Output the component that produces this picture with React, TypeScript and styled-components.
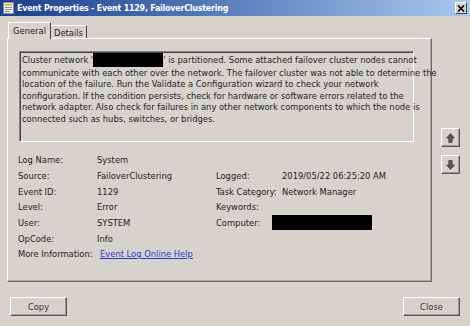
import React from "react";
import styled, { createGlobalStyle } from "styled-components";

const Global = createGlobalStyle`
  html, body { margin: 0; padding: 0; background: #d6d3cc; }
  body { font-family: "DejaVu Sans Condensed", "DejaVu Sans", sans-serif; }
`;

const Window = styled.div`
  width: 470px;
  height: 326px;
  background: #d6d3cc;
  display: flex;
  flex-direction: column;
  overflow: hidden;
  font-family: "DejaVu Sans Condensed", "DejaVu Sans", sans-serif;
  font-size: 9.3px;
  color: #1e1e1e;
`;

const TitleBar = styled.div`
  height: 16px;
  display: flex;
  align-items: center;
  padding: 0 3px;
  background: linear-gradient(to right, #1d3f8c 0%, #4d72b4 40%, #a8c9ef 100%);
  color: #fff;
  font-weight: bold;
  font-size: 8.8px;
  gap: 3px;
`;

const TitleText = styled.span`
  flex: 1;
  letter-spacing: -0.2px;
`;

const CloseBox = styled.div`
  width: 10px;
  height: 10px;
  background: #d6d3cc;
  border: 1px solid;
  border-color: #fff #404040 #404040 #fff;
  display: flex;
  align-items: center;
  justify-content: center;
`;

const Body = styled.div`
  flex: 1;
  display: flex;
  flex-direction: column;
  padding: 6px 0 0 7px;
`;

const MainRow = styled.div`
  display: flex;
  align-items: flex-start;
`;

const TabArea = styled.div`
  display: flex;
  flex-direction: column;
  width: 425px;
`;

const TabStrip = styled.div`
  display: flex;
  align-items: flex-end;
  height: 16px;
  padding-left: 1px;
  position: relative;
  z-index: 1;
`;

const Tab = styled.div<{ $active?: boolean }>`
  height: ${(p) => (p.$active ? 17 : 13)}px;
  padding: 0 ${(p) => (p.$active ? 4 : 3)}px;
  display: flex;
  align-items: center;
  box-sizing: border-box;
  background: #d6d3cc;
  border-top: 1px solid #fff;
  border-left: ${(p) => (p.$active ? "1px solid #fff" : "none")};
  border-right: 1px solid #404040;
  margin-bottom: ${(p) => (p.$active ? -1 : 0)}px;
  padding-bottom: ${(p) => (p.$active ? 2 : 0)}px;
`;

const Panel = styled.div`
  height: 244px;
  box-sizing: border-box;
  border: 1px solid;
  border-color: #fff #6c6a66 #6c6a66 #fff;
  box-shadow: inset -1px -1px 0 #a8a59e;
  padding: 12px 0 0 11px;
  display: flex;
  flex-direction: column;
`;

const Description = styled.div`
  width: 395px;
  height: 91px;
  box-sizing: border-box;
  border: 1px solid;
  border-color: #8a8782 #fff #fff #8a8782;
  box-shadow: inset 1px 1px 0 #444;
  padding: 1px 0 0 2px;
  line-height: 11.4px;
  white-space: nowrap;
`;

const Redact = styled.span<{ $w: number; $h: number }>`
  display: inline-block;
  width: ${(p) => p.$w}px;
  height: ${(p) => p.$h}px;
  background: #000;
  vertical-align: middle;
`;

const Fields = styled.div`
  margin-top: 10px;
  margin-left: -1px;
  display: grid;
  grid-template-columns: 79px 119px 66px auto;
  grid-auto-rows: 15.67px;
  align-items: center;
`;

const Label = styled.div<{ $col?: number }>`
  grid-column: ${(p) => p.$col ?? 1};
`;

const Value = styled.div<{ $col?: number; $shift?: number }>`
  grid-column: ${(p) => p.$col ?? 2};
  margin-left: ${(p) => p.$shift ?? 0}px;
  white-space: nowrap;
`;

const Link = styled.a`
  color: #3034cc;
  text-decoration: underline;
  margin-left: 3px;
  cursor: pointer;
`;

const SideButtons = styled.div`
  display: flex;
  flex-direction: column;
  gap: 8px;
  margin-top: 106px;
  margin-left: 9px;
`;

const ArrowButton = styled.div`
  width: 19px;
  height: 19px;
  box-sizing: border-box;
  border: 1px solid;
  border-color: #fff #555 #555 #fff;
  box-shadow: inset -1px -1px 0 #a09d96;
  background: #d6d3cc;
  display: flex;
  align-items: center;
  justify-content: center;
`;

const Footer = styled.div`
  display: flex;
  justify-content: space-between;
  padding: 15px 10px 0 3px;
`;

const PushButton = styled.div`
  width: 57px;
  height: 19px;
  box-sizing: border-box;
  border: 1px solid;
  border-color: #fff #555 #555 #fff;
  box-shadow: inset -1px -1px 0 #a09d96;
  background: #d6d3cc;
  display: flex;
  align-items: center;
  justify-content: center;
  color: #333;
`;

const DocIcon = () => (
  <svg width="11" height="12" viewBox="0 0 11 12">
    <rect x="0.5" y="0.5" width="10" height="11" fill="#f4f1e6" stroke="#8a8a8a" />
    <rect x="2" y="2" width="7" height="1.5" fill="#d9a43a" />
    <rect x="2" y="5" width="7" height="1" fill="#7a8fb8" />
    <rect x="2" y="7" width="7" height="1" fill="#7a8fb8" />
    <rect x="2" y="9" width="5" height="1" fill="#7a8fb8" />
  </svg>
);

const XGlyph = () => (
  <svg width="8" height="7" viewBox="0 0 8 7">
    <path d="M1 0.5 L7 6.5 M7 0.5 L1 6.5" stroke="#000" strokeWidth="1.6" />
  </svg>
);

const UpArrow = () => (
  <svg width="9" height="10" viewBox="0 0 9 10">
    <path d="M4.5 0.5 L8.5 5 L6.3 5 L6.3 9.5 L2.7 9.5 L2.7 5 L0.5 5 Z" fill="#555" stroke="#3a3a3a" strokeWidth="0.6" />
  </svg>
);

const DownArrow = () => (
  <svg width="9" height="10" viewBox="0 0 9 10">
    <path d="M4.5 9.5 L8.5 5 L6.3 5 L6.3 0.5 L2.7 0.5 L2.7 5 L0.5 5 Z" fill="#555" stroke="#3a3a3a" strokeWidth="0.6" />
  </svg>
);

export default function App() {
  return (
    <>
      <Global />
      <Window>
        <TitleBar>
          <DocIcon />
          <TitleText>Event Properties - Event 1129, FailoverClustering</TitleText>
          <CloseBox>
            <XGlyph />
          </CloseBox>
        </TitleBar>
        <Body>
          <MainRow>
            <TabArea>
              <TabStrip>
                <Tab $active>General</Tab>
                <Tab>Details</Tab>
              </TabStrip>
              <Panel>
                <Description>
                  Cluster network '<Redact $w={70} $h={14} />' is partitioned. Some attached failover cluster nodes cannot
                  <br />
                  communicate with each other over the network. The failover cluster was not able to determine the
                  <br />
                  location of the failure. Run the Validate a Configuration wizard to check your network
                  <br />
                  configuration. If the condition persists, check for hardware or software errors related to the
                  <br />
                  network adapter. Also check for failures in any other network components to which the node is
                  <br />
                  connected such as hubs, switches, or bridges.
                </Description>
                <Fields>
                  <Label>Log Name:</Label>
                  <Value>System</Value>
                  <Label>Source:</Label>
                  <Value>FailoverClustering</Value>
                  <Label $col={3}>Logged:</Label>
                  <Value $col={4}>2019/05/22 06:25:20 AM</Value>
                  <Label>Event ID:</Label>
                  <Value>1129</Value>
                  <Label $col={3}>Task Category:</Label>
                  <Value $col={4}>Network Manager</Value>
                  <Label>Level:</Label>
                  <Value>Error</Value>
                  <Label $col={3}>Keywords:</Label>
                  <Value $col={4}></Value>
                  <Label>User:</Label>
                  <Value>SYSTEM</Value>
                  <Label $col={3}>Computer:</Label>
                  <Value $col={4} $shift={-10}>
                    <Redact $w={100} $h={15} />
                  </Value>
                  <Label>OpCode:</Label>
                  <Value>Info</Value>
                  <Label>More Information:</Label>
                  <Value>
                    <Link>Event Log Online Help</Link>
                  </Value>
                </Fields>
              </Panel>
            </TabArea>
            <SideButtons>
              <ArrowButton>
                <UpArrow />
              </ArrowButton>
              <ArrowButton>
                <DownArrow />
              </ArrowButton>
            </SideButtons>
          </MainRow>
          <Footer>
            <PushButton>Copy</PushButton>
            <PushButton>Close</PushButton>
          </Footer>
        </Body>
      </Window>
    </>
  );
}
